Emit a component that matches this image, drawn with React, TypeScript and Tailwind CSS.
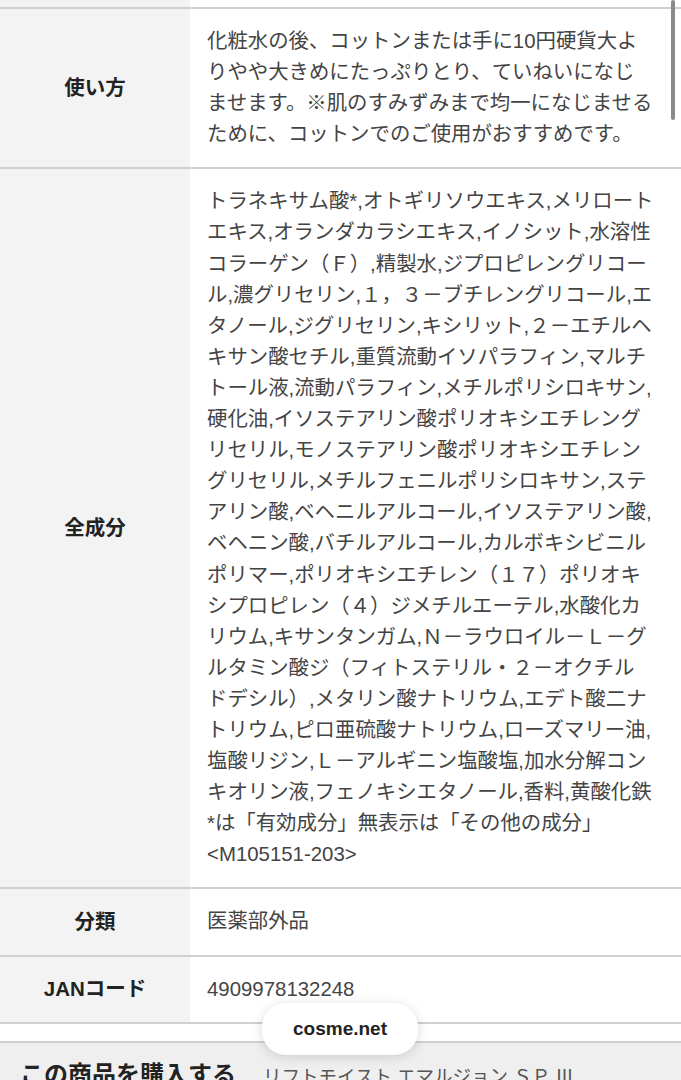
const usage = [
  "化粧水の後、コットンまたは手に10円硬貨大よ",
  "りやや大きめにたっぷりとり、ていねいになじ",
  "ませます。※肌のすみずみまで均一になじませる",
  "ために、コットンでのご使用がおすすめです。",
];

const ingredients = [
  "トラネキサム酸*,オトギリソウエキス,メリロート",
  "エキス,オランダカラシエキス,イノシット,水溶性",
  "コラーゲン（Ｆ）,精製水,ジプロピレングリコー",
  "ル,濃グリセリン,１，３－ブチレングリコール,エ",
  "タノール,ジグリセリン,キシリット,２－エチルヘ",
  "キサン酸セチル,重質流動イソパラフィン,マルチ",
  "トール液,流動パラフィン,メチルポリシロキサン,",
  "硬化油,イソステアリン酸ポリオキシエチレング",
  "リセリル,モノステアリン酸ポリオキシエチレン",
  "グリセリル,メチルフェニルポリシロキサン,ステ",
  "アリン酸,ベヘニルアルコール,イソステアリン酸,",
  "ベヘニン酸,バチルアルコール,カルボキシビニル",
  "ポリマー,ポリオキシエチレン（１７）ポリオキ",
  "シプロピレン（４）ジメチルエーテル,水酸化カ",
  "リウム,キサンタンガム,Ｎ－ラウロイル－Ｌ－グ",
  "ルタミン酸ジ（フィトステリル・２－オクチル",
  "ドデシル）,メタリン酸ナトリウム,エデト酸二ナ",
  "トリウム,ピロ亜硫酸ナトリウム,ローズマリー油,",
  "塩酸リジン,Ｌ－アルギニン塩酸塩,加水分解コン",
  "キオリン液,フェノキシエタノール,香料,黄酸化鉄",
  "*は「有効成分」無表示は「その他の成分」",
  "<M105151-203>",
];

const font = "font-['Liberation_Sans','Noto_Sans_CJK_JP',sans-serif]";

const Row = ({ label, lines }: { label: string; lines: string[] }) => (
  <div className="grid grid-cols-[190px_1fr] border-b-2 border-[#d0d0d0]">
    <div className="flex items-center justify-center bg-[#f3f3f3] text-[20.5px] font-bold text-[#222]">
      {label}
    </div>
    <div className="py-[17px] pl-[17px] text-[20.4px] leading-[31.1px] text-[#444]">
      {lines.map((l, i) => (
        <div key={i} className="whitespace-nowrap">
          {l}
        </div>
      ))}
    </div>
  </div>
);

export default function App() {
  return (
    <div className={`relative h-[1080px] w-full overflow-hidden bg-white ${font}`}>
      <div className="grid h-[7px] grid-cols-[190px_1fr] border-b-2 border-[#d0d0d0] box-content">
        <div className="bg-[#f3f3f3]" />
        <div />
      </div>
      <Row label="使い方" lines={usage} />
      <Row label="全成分" lines={ingredients} />
      <Row label="分類" lines={["医薬部外品"]} />
      <Row label="JANコード" lines={["4909978132248"]} />
      <div className="h-[17px] border-b-2 border-[#d0d0d0] box-content" />
      <div className="flex items-baseline gap-[27px] bg-[#efefef] pl-[20px] pt-[14px]">
        <span className="text-[24px] font-bold text-[#222]">この商品を購入する</span>
        <span className="text-[18.5px] text-[#555]">リフトモイスト エマルジョン ＳＰ Ⅲ</span>
      </div>

      {/* floating site pill */}
      <div className="absolute left-[262px] top-[1003px] flex h-[52px] w-[156px] items-center justify-center rounded-[24px] bg-white shadow-[0_2px_12px_rgba(0,0,0,0.15)]">
        <span className="text-[19px] font-bold text-[#222]">cosme.net</span>
      </div>

      {/* scrollbar */}
      <div className="absolute right-[6px] top-0 h-[120px] w-[4px] rounded-full bg-[#8a8a8a]" />
    </div>
  );
}
